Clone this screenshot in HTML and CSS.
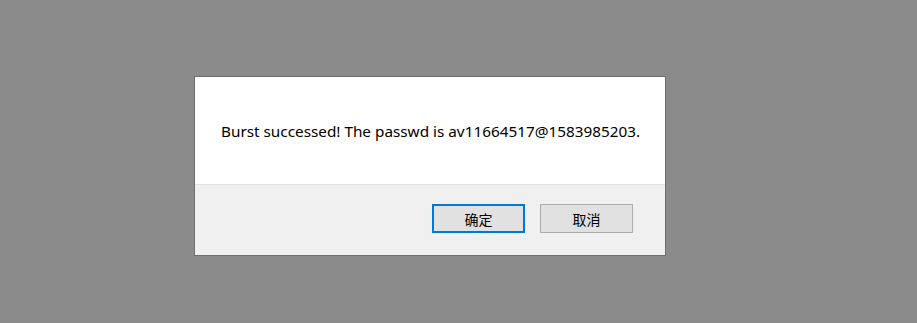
FILE: index.html
```html
<!DOCTYPE html>
<html>
<head>
<meta charset="utf-8">
<link rel="stylesheet" href="styles.css">
</head>
<body>
<div class="overlay">
  <div class="dialog">
    <div class="message">Burst successed! The passwd is av11664517@1583985203.</div>
    <div class="footer">
      <button class="btn btn-primary">确定</button>
      <button class="btn">取消</button>
    </div>
  </div>
</div>
</body>
</html>
```
FILE: styles.css
```css
html, body {
  margin: 0;
  padding: 0;
  background: #8b8b8b;
  width: 917px;
  height: 323px;
  overflow: hidden;
}
.overlay {
  padding: 76px 0 0 194px;
}
.dialog {
  width: 470px;
  border: 1px solid #6e6e6e;
  background: #ffffff;
  font-family: "Noto Sans", "Noto Sans CJK SC", sans-serif;
}
.message {
  height: 107px;
  box-sizing: border-box;
  padding: 43px 0 0 26px;
  font-size: 15.3px;
  color: #000;
  white-space: nowrap;
  line-height: 22px;
}
.footer {
  height: 71px;
  box-sizing: border-box;
  background: #f0f0f0;
  border-top: 1px solid #e3e3e3;
  display: flex;
  justify-content: flex-end;
  gap: 15px;
  padding: 19px 32px 0 0;
}
.btn {
  width: 93px;
  height: 29px;
  box-sizing: border-box;
  background: #e1e1e1;
  border: 1px solid #adadad;
  font-family: "Noto Sans CJK SC", sans-serif;
  font-size: 14px;
  color: #000;
  padding: 0;
  margin: 0;
}
.btn-primary {
  border: 2px solid #0078d7;
}
```
